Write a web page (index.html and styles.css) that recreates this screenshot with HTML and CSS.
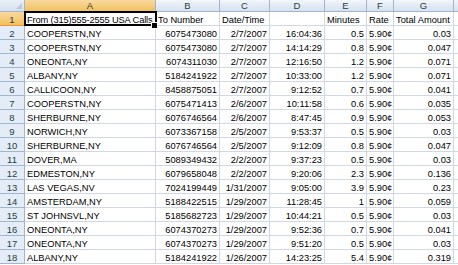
FILE: index.html
```html
<!DOCTYPE html>
<html>
<head>
<meta charset="utf-8">
<link rel="stylesheet" href="styles.css">
</head>
<body>
<div class="sheet">
  <div class="grid">
    <div class="corner"><span class="tri"></span></div>
    <div class="ch sel">A</div><div class="ch">B</div><div class="ch">C</div><div class="ch">D</div><div class="ch">E</div><div class="ch">F</div><div class="ch">G</div><div class="ch last"></div>

    <div class="rh sel">1</div><div class="c tight">From (315)555-2555 USA Calls</div><div class="c">To Number</div><div class="c">Date/Time</div><div class="c"></div><div class="c">Minutes</div><div class="c">Rate</div><div class="c">Total Amount</div><div class="c"></div>

    <div class="rh">2</div><div class="c">COOPERSTN,NY</div><div class="c r">6075473080</div><div class="c r">2/7/2007</div><div class="c r">16:04:36</div><div class="c r">0.5</div><div class="c">5.90¢</div><div class="c r">0.03</div><div class="c"></div>
    <div class="rh">3</div><div class="c">COOPERSTN,NY</div><div class="c r">6075473080</div><div class="c r">2/7/2007</div><div class="c r">14:14:29</div><div class="c r">0.8</div><div class="c">5.90¢</div><div class="c r">0.047</div><div class="c"></div>
    <div class="rh">4</div><div class="c">ONEONTA,NY</div><div class="c r">6074311030</div><div class="c r">2/7/2007</div><div class="c r">12:16:50</div><div class="c r">1.2</div><div class="c">5.90¢</div><div class="c r">0.071</div><div class="c"></div>
    <div class="rh">5</div><div class="c">ALBANY,NY</div><div class="c r">5184241922</div><div class="c r">2/7/2007</div><div class="c r">10:33:00</div><div class="c r">1.2</div><div class="c">5.90¢</div><div class="c r">0.071</div><div class="c"></div>
    <div class="rh">6</div><div class="c">CALLICOON,NY</div><div class="c r">8458875051</div><div class="c r">2/7/2007</div><div class="c r">9:12:52</div><div class="c r">0.7</div><div class="c">5.90¢</div><div class="c r">0.041</div><div class="c"></div>
    <div class="rh">7</div><div class="c">COOPERSTN,NY</div><div class="c r">6075471413</div><div class="c r">2/6/2007</div><div class="c r">10:11:58</div><div class="c r">0.6</div><div class="c">5.90¢</div><div class="c r">0.035</div><div class="c"></div>
    <div class="rh">8</div><div class="c">SHERBURNE,NY</div><div class="c r">6076746564</div><div class="c r">2/6/2007</div><div class="c r">8:47:45</div><div class="c r">0.9</div><div class="c">5.90¢</div><div class="c r">0.053</div><div class="c"></div>
    <div class="rh">9</div><div class="c">NORWICH,NY</div><div class="c r">6073367158</div><div class="c r">2/5/2007</div><div class="c r">9:53:37</div><div class="c r">0.5</div><div class="c">5.90¢</div><div class="c r">0.03</div><div class="c"></div>
    <div class="rh">10</div><div class="c">SHERBURNE,NY</div><div class="c r">6076746564</div><div class="c r">2/5/2007</div><div class="c r">9:12:09</div><div class="c r">0.8</div><div class="c">5.90¢</div><div class="c r">0.047</div><div class="c"></div>
    <div class="rh">11</div><div class="c">DOVER,MA</div><div class="c r">5089349432</div><div class="c r">2/2/2007</div><div class="c r">9:37:23</div><div class="c r">0.5</div><div class="c">5.90¢</div><div class="c r">0.03</div><div class="c"></div>
    <div class="rh">12</div><div class="c">EDMESTON,NY</div><div class="c r">6079658048</div><div class="c r">2/2/2007</div><div class="c r">9:20:06</div><div class="c r">2.3</div><div class="c">5.90¢</div><div class="c r">0.136</div><div class="c"></div>
    <div class="rh">13</div><div class="c">LAS VEGAS,NV</div><div class="c r">7024199449</div><div class="c r">1/31/2007</div><div class="c r">9:05:00</div><div class="c r">3.9</div><div class="c">5.90¢</div><div class="c r">0.23</div><div class="c"></div>
    <div class="rh">14</div><div class="c">AMSTERDAM,NY</div><div class="c r">5188422515</div><div class="c r">1/29/2007</div><div class="c r">11:28:45</div><div class="c r">1</div><div class="c">5.90¢</div><div class="c r">0.059</div><div class="c"></div>
    <div class="rh">15</div><div class="c">ST JOHNSVL,NY</div><div class="c r">5185682723</div><div class="c r">1/29/2007</div><div class="c r">10:44:21</div><div class="c r">0.5</div><div class="c">5.90¢</div><div class="c r">0.03</div><div class="c"></div>
    <div class="rh">16</div><div class="c">ONEONTA,NY</div><div class="c r">6074370273</div><div class="c r">1/29/2007</div><div class="c r">9:52:36</div><div class="c r">0.7</div><div class="c">5.90¢</div><div class="c r">0.041</div><div class="c"></div>
    <div class="rh">17</div><div class="c">ONEONTA,NY</div><div class="c r">6074370273</div><div class="c r">1/29/2007</div><div class="c r">9:51:20</div><div class="c r">0.5</div><div class="c">5.90¢</div><div class="c r">0.03</div><div class="c"></div>
    <div class="rh">18</div><div class="c">ALBANY,NY</div><div class="c r">5184241922</div><div class="c r">1/26/2007</div><div class="c r">14:23:25</div><div class="c r">5.4</div><div class="c">5.90¢</div><div class="c r">0.319</div><div class="c"></div>
  </div>
  <div class="selection"><span class="handle"></span></div>
</div>
</body>
</html>
```
FILE: styles.css
```css
html, body {
  margin: 0;
  padding: 0;
  background: #ffffff;
  overflow: hidden;
}
.sheet {
  position: relative;
  width: 458px;
  height: 265px;
  font-family: "Liberation Sans", Arial, sans-serif;
  font-size: 9.3px;
  color: #000;
}
.grid {
  display: grid;
  grid-template-columns: 25px 131px 64px 50px 55px 42px 27px 60px 4px;
  grid-template-rows: 12px repeat(18, 14px);
}
.grid > div {
  box-sizing: border-box;
  white-space: nowrap;
}
.corner {
  position: relative;
  background: linear-gradient(#e9eff8, #d7e1ee);
  border-right: 1px solid #9eb6ce;
  border-bottom: 1px solid #9eb6ce;
}
.tri {
  position: absolute;
  right: 2px;
  bottom: 2px;
  width: 0;
  height: 0;
  border-left: 6px solid transparent;
  border-bottom: 6px solid #b9c8db;
}
.ch {
  background: linear-gradient(#f3f7fb, #e1e9f4 55%, #d9e3ef);
  border-right: 1px solid #9eb6ce;
  border-bottom: 1px solid #9eb6ce;
  text-align: center;
  color: #27413e;
  font-size: 9.5px;
  line-height: 11px;
}
.ch.last {
  border-right: none;
}
.rh {
  background: #e4ecf7;
  border-right: 1px solid #9eb6ce;
  border-bottom: 1px solid #9eb6ce;
  text-align: center;
  color: #27413e;
  font-size: 9.5px;
  line-height: 13px;
  padding-top: 1px;
}
.ch.sel, .rh.sel {
  background: linear-gradient(#f9d99f, #f1c15f);
  border-bottom-color: #f29536;
}
.rh.sel {
  border-right-color: #f29536;
}
.c {
  border-right: 1px solid #d0d7e5;
  border-bottom: 1px solid #d0d7e5;
  padding: 2px 2px 0 2px;
  line-height: 12px;
}
.c.r {
  text-align: right;
}
.c.tight {
  letter-spacing: -0.15px;
}
.selection {
  position: absolute;
  left: 24px;
  top: 11px;
  width: 133px;
  height: 15px;
  box-sizing: border-box;
  border: 2px solid #000;
}
.handle {
  position: absolute;
  right: -3px;
  bottom: -5px;
  width: 5px;
  height: 5px;
  background: #000;
  border: 1px solid #fff;
}
```
